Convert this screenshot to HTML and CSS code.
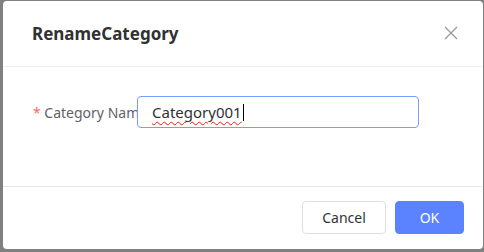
FILE: index.html
```html
<!DOCTYPE html>
<html>
<head>
<meta charset="utf-8">
<link rel="stylesheet" href="styles.css">
</head>
<body>
<div class="dialog">
  <div class="header">
    <span class="title">RenameCategory</span>
    <svg class="close" width="14" height="14" viewBox="0 0 14 14"><path d="M1 1L13 13M13 1L1 13" stroke="#999" stroke-width="1.3" fill="none"/></svg>
  </div>
  <div class="body">
    <div class="row">
      <div class="label"><span class="req">*</span> Category Name</div>
      <div class="input"><span class="val">Category001</span><span class="caret"></span></div>
    </div>
  </div>
  <div class="footer">
    <button class="btn cancel">Cancel</button>
    <button class="btn ok">OK</button>
  </div>
</div>
</body>
</html>
```
FILE: styles.css
```css
html, body { margin: 0; padding: 0; }
body {
  width: 484px; height: 252px;
  background: #808080;
  font-family: "Noto Sans", "Open Sans", sans-serif;
  overflow: hidden;
}
.dialog {
  margin: 1px 1px 0 3px;
  width: 480px; height: 248px;
  background: #fff;
  border-radius: 4px;
  display: flex; flex-direction: column;
}
.header {
  height: 65px;
  border-bottom: 1px solid #eeedf3;
  display: flex; align-items: center; justify-content: space-between;
  padding: 0 25px 0 29px;
}
.title { font-size: 17px; font-weight: 700; color: #303133; margin-top: -1px; }
.close { margin-top: -2px; }
.body { height: 120px; border-bottom: 1px solid #e8e8e8; padding-top: 29px; box-sizing: border-box; }
.row { display: flex; align-items: center; padding-left: 30px; }
.label {
  width: 104px; white-space: nowrap; overflow: hidden;
  font-size: 14px; color: #606266;
}
.req { color: #f56c6c; }
.input {
  width: 282px; height: 32px; box-sizing: border-box;
  border: 1px solid #7b9cff; border-radius: 4px;
  display: flex; align-items: center; padding-left: 14px;
  font-size: 15px; color: #303133;
}
.val { text-decoration: underline wavy #e52020; text-decoration-thickness: 1px; text-underline-offset: 3px; }
.caret { width: 1px; height: 17px; background: #000; margin-left: 1px; }
.footer { flex: 1; display: flex; justify-content: flex-end; align-items: flex-start; padding: 14px 19px 0 0; gap: 9px; }
.btn {
  height: 33px; border-radius: 4px; font-family: inherit; font-size: 14px;
  padding: 0; cursor: pointer;
}
.cancel { width: 84px; background: #fff; border: 1px solid #dcdfe6; color: #333; }
.ok { width: 69px; background: #5b82ff; border: 1px solid #5b82ff; color: #fff; }
```
